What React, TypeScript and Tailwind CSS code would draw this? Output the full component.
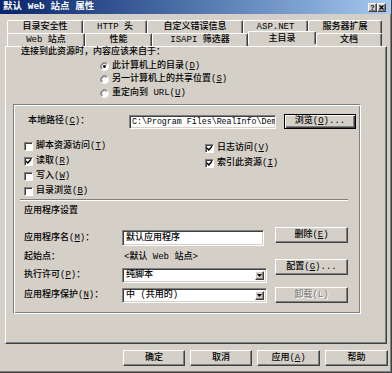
import React from "react";

const U = ({ c }: { c: string }) => <span className="underline underline-offset-[1px]">{c}</span>;

const raised =
  "bg-[#d4d0c8] border border-t-white border-l-white border-r-[#404040] border-b-[#404040] shadow-[inset_-1px_-1px_0_#808080]";
const sunken =
  "bg-white border border-t-[#808080] border-l-[#808080] border-r-white border-b-white shadow-[inset_1px_1px_0_#404040,inset_-1px_-1px_0_#d4d0c8]";
const etched =
  "border border-t-[#808080] border-l-[#808080] border-r-white border-b-white shadow-[inset_1px_1px_0_#fff,inset_-1px_-1px_0_#808080]";

function Btn({ children, cls, disabled, def }: { children: React.ReactNode; cls: string; disabled?: boolean; def?: boolean }) {
  const frame = def
    ? "bg-[#d4d0c8] border border-black shadow-[inset_1px_1px_0_#fff,inset_-1px_-1px_0_#404040,inset_-2px_-2px_0_#808080]"
    : raised;
  return (
    <div className={`flex items-center justify-center ${frame} ${cls}`}>
      <span className={disabled ? "text-[#808080] [text-shadow:1px_1px_0_#fff]" : ""}>{children}</span>
    </div>
  );
}

function Check({ on }: { on?: boolean }) {
  return (
    <div className="w-[9px] h-[9px] shrink-0 bg-white border border-t-[#808080] border-l-[#808080] border-r-white border-b-white shadow-[inset_1px_1px_0_#404040] flex items-center justify-center">
      {on && (
        <svg width="7" height="7" viewBox="0 0 7 7">
          <polyline points="1,3 2.8,5 6,1.2" fill="none" stroke="#000" strokeWidth="1.4" />
        </svg>
      )}
    </div>
  );
}

function Radio({ on }: { on?: boolean }) {
  return (
    <svg width="9" height="9" viewBox="0 0 12 12" className="shrink-0">
      <circle cx="6" cy="6" r="5.3" fill="#fff" />
      <path d="M2.2 9.8 A5.3 5.3 0 0 1 9.8 2.2" fill="none" stroke="#808080" strokeWidth="1.2" />
      <path d="M9.8 2.2 A5.3 5.3 0 0 1 2.2 9.8" fill="none" stroke="#fff" strokeWidth="1.2" />
      <path d="M3.1 8.9 A4.1 4.1 0 0 1 8.9 3.1" fill="none" stroke="#404040" strokeWidth="1.1" />
      {on && <circle cx="6" cy="6" r="1.9" fill="#000" />}
    </svg>
  );
}

function Select({ value }: { value: string }) {
  return (
    <div className={`${sunken} w-[145px] h-[15px] flex items-center p-[2px]`}>
      <span className="flex-1 pl-[1px] whitespace-nowrap">{value}</span>
      <div className={`${raised} w-[9px] h-full flex items-center justify-center`}>
        <svg width="5" height="3" viewBox="0 0 5 3">
          <polygon points="0,0 5,0 2.5,3" fill="#000" />
        </svg>
      </div>
    </div>
  );
}

const tabBase =
  "h-full flex items-center justify-center bg-[#d4d0c8] border-t border-l border-r border-t-white border-l-white border-r-[#404040] shadow-[inset_-1px_0_0_#808080] rounded-t-[2px] whitespace-nowrap";

export default function App() {
  return (
    <div className="w-[392px] h-[373px] bg-[#d4d0c8] overflow-hidden font-['Liberation_Mono','Noto_Sans_CJK_SC',monospace] text-[9px] font-medium leading-none text-black flex flex-col border-r border-b border-r-[#404040] border-b-[#404040] shadow-[inset_-1px_-1px_0_#808080]">
      {/* title bar */}
      <div className="h-[14px] shrink-0 flex items-center justify-between bg-linear-to-r from-[#0a246a] to-[#a6caf0] pl-[3px] pr-[5px]">
        <span className="text-white font-bold text-[9.5px] whitespace-nowrap">默认 Web 站点 属性</span>
        <div className="flex gap-0">
          <div className={`${raised} w-[9px] h-[9px] flex items-center justify-center font-bold text-[7px] font-['Liberation_Sans',sans-serif]`}>?</div>
          <div className={`${raised} w-[9px] h-[9px] flex items-center justify-center`}>
            <svg width="5" height="5" viewBox="0 0 5 5">
              <path d="M0.5 0.5 L4.5 4.5 M4.5 0.5 L0.5 4.5" stroke="#000" strokeWidth="1.3" />
            </svg>
          </div>
        </div>
      </div>

      {/* tabs */}
      <div className="mt-[6px] pl-[7px] flex flex-col">
        <div className="h-[13px] flex">
          <div className={`${tabBase} w-[76px]`}>目录安全性</div>
          <div className={`${tabBase} w-[64px]`}>HTTP 头</div>
          <div className={`${tabBase} w-[96px]`}>自定义错误信息</div>
          <div className={`${tabBase} w-[65px]`}>ASP.NET</div>
          <div className={`${tabBase} w-[74px]`}>服务器扩展</div>
        </div>
        <div className="h-[13px] flex">
          <div className={`${tabBase} w-[78px]`}>Web 站点</div>
          <div className={`${tabBase} w-[67px]`}>性能</div>
          <div className={`${tabBase} w-[96px]`}>ISAPI 筛选器</div>
          <div className={`${tabBase} relative z-10 w-[68px] h-[16px] -mt-[2px] items-start pt-[3px]`}>主目录</div>
          <div className={`${tabBase} w-[66px]`}>文档</div>
        </div>
      </div>

      {/* panel */}
      <div className="ml-[5px] w-[382px] h-[298px] shrink-0 flex flex-col border-t border-l border-r border-b border-t-white border-l-white border-r-[#404040] border-b-[#404040] shadow-[inset_-1px_-1px_0_#808080]">
        <div className="ml-[15px] h-[10px] leading-[10px] whitespace-nowrap">连接到此资源时，内容应该来自于：</div>
        <div className="ml-[94px] mt-[2.5px] flex flex-col">
          <div className="h-[13.5px] flex items-center gap-[3px]">
            <Radio on />
            <span>此计算机上的目录(<U c="D" />)</span>
          </div>
          <div className="h-[13.5px] flex items-center gap-[3px]">
            <Radio />
            <span>另一计算机上的共享位置(<U c="S" />)</span>
          </div>
          <div className="h-[13.5px] flex items-center gap-[3px]">
            <Radio />
            <span>重定向到 URL(<U c="U" />)</span>
          </div>
        </div>

        {/* group box */}
        <div className={`ml-[7px] mt-[4px] w-[348px] h-[210px] shrink-0 flex flex-col ${etched}`}>
          <div className="mt-[9px] pl-[14px] flex items-start">
            <div className="w-[101px] h-[15px] flex items-center whitespace-nowrap">本地路径(<U c="C" />)：</div>
            <div className={`${sunken} mt-[1px] w-[147px] h-[14px] flex items-center pl-[2px] overflow-hidden whitespace-nowrap text-[8.3px]`}>
              C:\Program Files\RealInfo\Dem
            </div>
            <Btn def cls="ml-[8px] w-[72px] h-[15px]">
              浏览(<U c="O" />)...
            </Btn>
          </div>

          <div className="mt-[10px] pl-[10px] flex">
            <div className="w-[181px] flex flex-col">
              <div className="h-[15px] flex items-center gap-[3px]">
                <Check />
                <span>脚本资源访问(<U c="T" />)</span>
              </div>
              <div className="h-[15px] flex items-center gap-[3px]">
                <Check on />
                <span>读取(<U c="R" />)</span>
              </div>
              <div className="h-[15px] flex items-center gap-[3px]">
                <Check />
                <span>写入(<U c="W" />)</span>
              </div>
              <div className="h-[15px] flex items-center gap-[3px]">
                <Check />
                <span>目录浏览(<U c="B" />)</span>
              </div>
            </div>
            <div className="mt-[2px] flex flex-col">
              <div className="h-[15px] flex items-center gap-[3px]">
                <Check on />
                <span>日志访问(<U c="V" />)</span>
              </div>
              <div className="h-[15px] flex items-center gap-[3px]">
                <Check on />
                <span>索引此资源(<U c="I" />)</span>
              </div>
            </div>
          </div>

          <div className="ml-[6px] w-[328px] h-[2px] border-t border-b border-t-[#808080] border-b-white" />

          <div className="ml-[10px] mt-[5px] h-[10px] leading-[10px]">应用程序设置</div>

          <div className="pl-[10px] flex">
            <div className="w-[243px] flex flex-col">
              <div className="mt-[14px] h-[16px] flex items-center">
                <span className="w-[98px] whitespace-nowrap">应用程序名(<U c="M" />)：</span>
                <div className={`${sunken} w-[142px] h-[16px] flex items-center pl-[3px]`}>默认应用程序</div>
              </div>
              <div className="mt-[4px] h-[14px] flex items-center">
                <span className="w-[98px]">起始点：</span>
                <span className="pl-[2px] whitespace-nowrap">&lt;默认 Web 站点&gt;</span>
              </div>
              <div className="mt-[4px] h-[15px] flex items-center">
                <span className="w-[98px] whitespace-nowrap">执行许可(<U c="P" />)：</span>
                <Select value="纯脚本" />
              </div>
              <div className="mt-[5px] h-[15px] flex items-center">
                <span className="w-[98px] whitespace-nowrap">应用程序保护(<U c="N" />)：</span>
                <Select value="中 (共用的)" />
              </div>
            </div>
            <div className="ml-[8px] flex flex-col">
              <Btn cls="mt-[11px] w-[73px] h-[16px]">
                删除(<U c="E" />)
              </Btn>
              <Btn cls="mt-[16px] w-[73px] h-[16px]">
                配置(<U c="G" />)...
              </Btn>
              <Btn disabled cls="mt-[12px] w-[73px] h-[16px]">
                卸载(L)
              </Btn>
            </div>
          </div>
        </div>
      </div>

      {/* bottom buttons */}
      <div className="mt-[6px] ml-[123px] flex gap-[5px]">
        <Btn cls="w-[62px] h-[16px]">确定</Btn>
        <Btn cls="w-[62px] h-[16px]">取消</Btn>
        <Btn cls="w-[63px] h-[16px]">
          应用(<U c="A" />)
        </Btn>
        <Btn cls="w-[63px] h-[16px]">帮助</Btn>
      </div>
    </div>
  );
}
